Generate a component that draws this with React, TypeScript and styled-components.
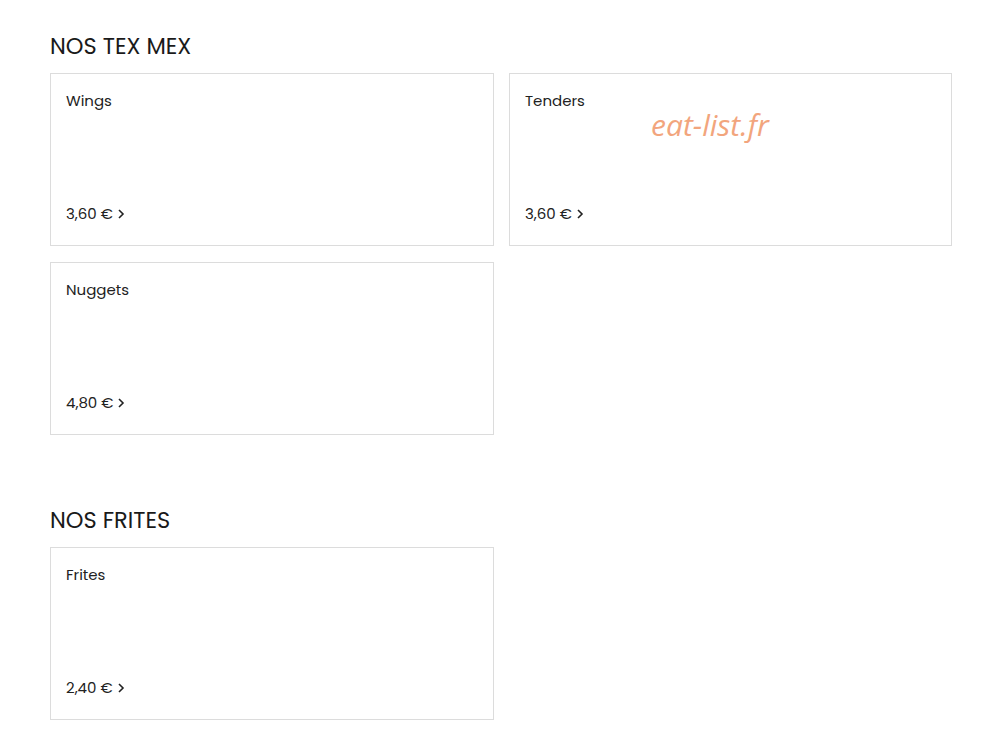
import React from 'react';
import styled, { createGlobalStyle } from 'styled-components';

const GlobalStyle = createGlobalStyle`
  * { box-sizing: border-box; }
  body {
    margin: 0;
    background: #ffffff;
    font-family: Poppins, Inter, "Noto Sans", sans-serif;
    color: #222222;
  }
`;

type Item = { name: string; price: string };

const sections: { title: string; items: Item[] }[] = [
  {
    title: 'NOS TEX MEX',
    items: [
      { name: 'Wings', price: '3,60 €' },
      { name: 'Tenders', price: '3,60 €' },
      { name: 'Nuggets', price: '4,80 €' },
    ],
  },
  {
    title: 'NOS FRITES',
    items: [{ name: 'Frites', price: '2,40 €' }],
  },
];

export default function App() {
  return (
    <>
      <GlobalStyle />
      <Page>
        <Watermark>eat-list.fr</Watermark>
        {sections.map((s) => (
          <Section key={s.title}>
            <Heading>{s.title}</Heading>
            <Grid>
              {s.items.map((it) => (
                <Card key={it.name}>
                  <Name>{it.name}</Name>
                  <Price>
                    {it.price}
                    <Chevron viewBox="0 0 10 12">
                      <path d="M3 2 L7 6 L3 10" />
                    </Chevron>
                  </Price>
                </Card>
              ))}
            </Grid>
          </Section>
        ))}
      </Page>
    </>
  );
}

const Page = styled.div`
  position: relative;
  width: 902px;
  margin-left: 50px;
  padding-top: 31px;
`;

const Watermark = styled.div`
  position: absolute;
  left: 601px;
  top: 104px;
  font-family: "Open Sans", sans-serif;
  font-style: italic;
  font-size: 30px;
  color: #f2a57d;
  pointer-events: none;
`;

const Section = styled.section`
  margin-bottom: 70px;

  &:last-child {
    margin-bottom: 0;
  }
`;

const Heading = styled.h2`
  margin: 0 0 12px;
  font-size: 22.5px;
  line-height: 30px;
  font-weight: 400;
  color: #1a1a1a;
`;

const Grid = styled.div`
  display: grid;
  grid-template-columns: 444px 443px;
  column-gap: 15px;
  row-gap: 16px;
`;

const Card = styled.div`
  height: 173px;
  border: 1px solid #dcdcdc;
  padding: 16px 15px 20px;
  display: flex;
  flex-direction: column;
  justify-content: space-between;
  background: #fff;
`;

const Name = styled.div`
  font-size: 15px;
  line-height: 22px;
  color: #222;
`;

const Price = styled.div`
  display: flex;
  align-items: center;
  gap: 3px;
  font-size: 15px;
  line-height: 22px;
  color: #222;
`;

const Chevron = styled.svg`
  width: 10px;
  height: 12px;
  fill: none;
  stroke: #222;
  stroke-width: 1.6;
`;
